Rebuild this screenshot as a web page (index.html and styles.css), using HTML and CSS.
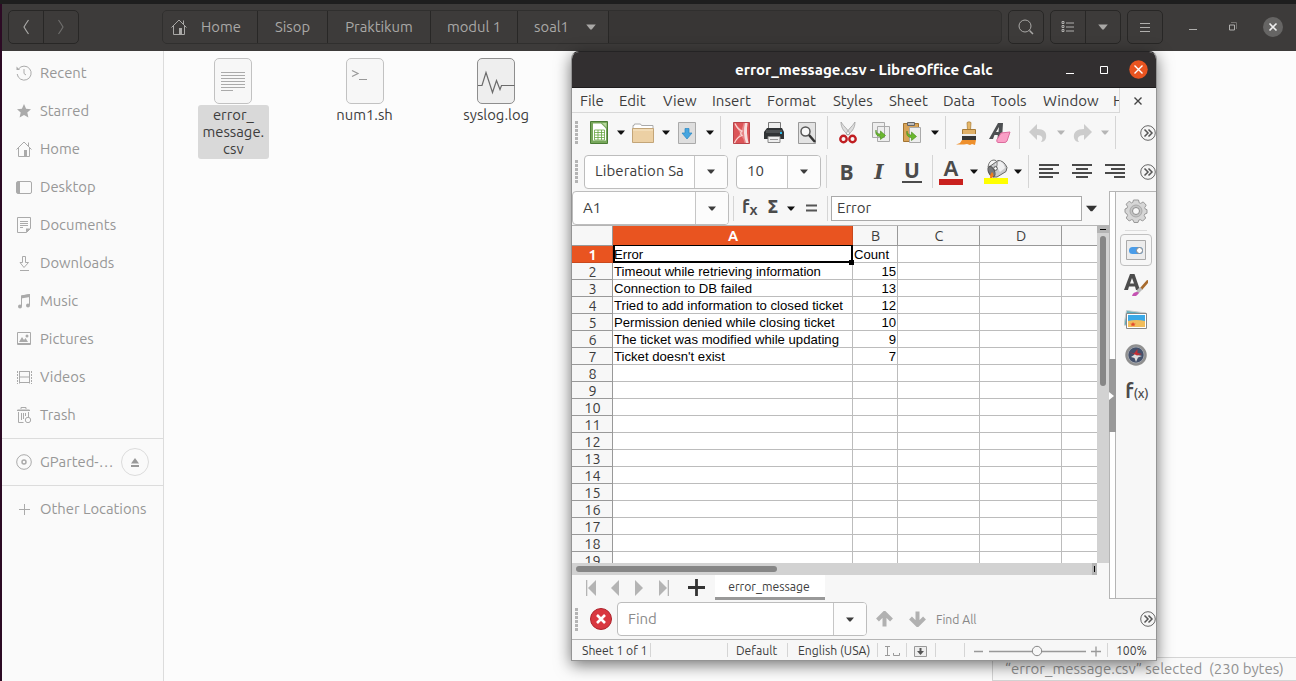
FILE: index.html
```html
<!DOCTYPE html>
<html lang="en">
<head>
<meta charset="utf-8">
<title>soal1</title>
<link rel="stylesheet" href="styles.css">
</head>
<body>
<svg class="defs" width="0" height="0">
  <symbol id="caret" viewBox="0 0 8 5"><path d="M0 .5h8L4.6 4.500H3.400z" fill="currentColor"/></symbol>
  <symbol id="house" viewBox="0 0 16 16"><path d="M.5 8.500 8 1l7.500 7.500M2.500 7v8.500h11V7M12.500 1.500v4" fill="none" stroke="currentColor"/><path d="M8 9h3v7H8z" fill="currentColor"/></symbol>
  <symbol id="more" viewBox="0 0 16 16"><circle cx="8" cy="8" r="7.300" fill="#f4f4f4" stroke="#666"/><path d="m4.500 4.500 3.500 3.500-3.500 3.500M8.500 4.500 12 8l-3.500 3.500" fill="none" stroke="#555" stroke-width="1.500"/></symbol>
</svg>
<div class="desktop">
  <header class="headerbar">
    <div class="group nav">
      <span class="btn"><svg width="8" height="16"><path d="M6.500 1Q4 4.500 2 8q2 3.500 4.500 7" fill="none" stroke="#a9a8a6" stroke-width="1.200"/></svg></span>
      <span class="btn dim"><svg width="8" height="16"><path d="M1.500 1Q4 4.500 6 8q-2 3.500-4.500 7" fill="none" stroke="#6f6e6d" stroke-width="1.200"/></svg></span>
    </div>
    <nav class="path">
      <span class="crumb home"><svg width="16" height="16"><use href="#house"/></svg><span>Home</span></span>
      <span class="crumb sisop">Sisop</span>
      <span class="crumb prak">Praktikum</span>
      <span class="crumb modul">modul 1</span>
      <span class="crumb soal">soal1<svg width="10" height="6"><use href="#caret"/></svg></span>
    </nav>
    <div class="group search"><span class="btn"><svg width="16" height="16" fill="none" stroke="#a9a8a6"><circle cx="7" cy="7" r="6"/><path d="m11.500 11.500 3.500 3.500" stroke-width="1.500"/></svg></span></div>
    <div class="group views">
      <span class="btn"><svg width="14" height="12" fill="none" stroke="#b0afad"><path d="M5 2h8M5 6h8M5 10h8M1 .5h2v2H1zM1 4.500h2v2H1zM1 8.500h2v2H1z"/></svg></span>
      <span class="btn"><svg width="10" height="6"><use href="#caret"/></svg></span>
    </div>
    <div class="group menu"><span class="btn"><svg width="12" height="11" stroke="#b0afad"><path d="M1 1.500h10M1 5.500h10M1 9.500h10"/></svg></span></div>
    <div class="winctl">
      <svg width="10" height="12"><path d="M1 8.500h8" stroke="#b0afad"/></svg>
      <svg width="10" height="10" fill="none"><path d="M3 .5h5.500V7" stroke="#73716f"/><path d="M1.500 3h5v5h-5z" stroke="#b0afad"/></svg>
      <svg width="20" height="20"><circle cx="10" cy="10" r="10" fill="#666564"/><path d="m6.500 6.500 7 7m0-7-7 7" stroke="#eee" stroke-width="1.600"/></svg>
    </div>
  </header>

  <div class="body">
    <aside class="places">
      <div class="place"><svg width="16" height="16" fill="none" stroke="currentColor"><path d="M2.500 4A7 7 0 1 1 1.200 9"/><path d="M8 4v4.500l2 1.500"/><path d="M.5 1.500V5H4z" fill="currentColor" stroke="none"/></svg>Recent</div>
      <div class="place"><svg width="16" height="16" fill="currentColor"><path d="m8 1 2.100 4.700 4.900.5-3.700 3.400 1.100 4.900L8 12l-4.400 2.500 1.100-4.900L1 6.200l4.900-.5z"/></svg>Starred</div>
      <div class="place"><svg width="16" height="16"><use href="#house"/></svg>Home</div>
      <div class="place"><svg width="16" height="16"><rect x=".5" y="2.500" width="15" height="12" rx="1.500" fill="none" stroke="currentColor"/><path d="M1 3h3v11H1z" fill="currentColor"/></svg>Desktop</div>
      <div class="place"><svg width="16" height="16"><path d="M1.500.5h13v11l-4 4h-9zM4 4.500h8M4 6.500h8M4 8.500h8M4 10.500h3" fill="none" stroke="currentColor"/><path d="M10 15.500V11.500h4.500z" fill="currentColor"/></svg>Documents</div>
      <div class="place"><svg width="16" height="16" fill="none" stroke="currentColor"><path d="M6.500 1.500h3v6h3l-4.500 5-4-5h2.500zM4 15.500h9"/></svg>Downloads</div>
      <div class="place"><svg width="16" height="16"><path d="M5.500 13V3l8-1.500v10.500" fill="none" stroke="currentColor"/><path d="M5 2.500 14 1v3L5 5.500z" fill="currentColor"/><circle cx="4" cy="13.500" r="2" fill="currentColor"/><circle cx="12" cy="12.500" r="2" fill="currentColor"/></svg>Music</div>
      <div class="place"><svg width="16" height="16"><path d="M1.500 1.500h13v12h-13z" fill="none" stroke="currentColor"/><path d="M2 12h12v2H2zM3 11l3-5 2 3 1.500-2 2.500 4z" fill="currentColor"/><circle cx="11" cy="5" r="1.500" fill="currentColor"/></svg>Pictures</div>
      <div class="place"><svg width="16" height="16" fill="none" stroke="currentColor"><path d="M3.500 2v12.500M13.500 2v12.500M3.500 2.500h10M3.500 8h10M3.500 13.500h10"/><path d="M1.500 2v13M15.500 2v13" stroke-dasharray="2 1"/></svg>Videos</div>
      <div class="place"><svg width="16" height="16" fill="none" stroke="currentColor"><path d="M5 2V.5h5V2M1 3.500h13M2.500 5v10.500h5M12.500 5v5M5.500 6v7M7.500 6v6M9.500 6v3"/><path d="M1.500 2.500h12V4h-12z" fill="currentColor" stroke="none"/><circle cx="12" cy="13" r="2.700"/></svg>Trash</div>
      <div class="rule"></div>
      <div class="place gp"><svg width="16" height="16" fill="none" stroke="currentColor"><circle cx="8" cy="8" r="7.300"/><circle cx="8" cy="8" r="2" stroke-width="1.500"/></svg><span>GParted-…</span><span class="eject"><svg width="8" height="9" fill="#999"><path d="M4 0l4 5.500H0zM0 7h8v2H0z"/></svg></span></div>
      <div class="rule"></div>
      <div class="place other"><svg width="16" height="16" stroke="currentColor"><path d="M3 8.500h11M8.500 3v11"/></svg>Other Locations</div>
    </aside>

    <main class="files">
      <div class="file">
        <svg width="38" height="46"><rect x=".5" y=".5" width="37" height="45" rx="4.500" fill="#f7f7f7" stroke="#c2c2c2"/><path d="M7 14.500h24M7 17.500h24M7 20.500h24M7 23.500h24M7 26.500h24M7 29.500h24M7 32.500h12" stroke="#aaa"/></svg>
        <span class="name sel">error_<br>message.<br>csv</span>
      </div>
      <div class="file">
        <svg width="38" height="46"><rect x=".5" y=".5" width="37" height="45" rx="4.500" fill="#f7f7f7" stroke="#c2c2c2"/><path d="m6 12.500 6 3-6 3M13 21.500h8" fill="none" stroke="#999" stroke-width="1.200"/></svg>
        <span class="name">num1.sh</span>
      </div>
      <div class="file">
        <svg width="38" height="46"><rect x=".5" y=".5" width="37" height="45" rx="4.500" fill="#eee" stroke="#8e8e8e"/><path d="M1 27.500h4l4-13 6.500 20 4-12 3.500 9 1.500-4h13" fill="none" stroke="#6b6b6b" stroke-width="1.200"/></svg>
        <span class="name">syslog.log</span>
      </div>
    </main>
  </div>
  <div class="selection">“error_message.csv” selected&nbsp; (230 bytes)</div>

  <section class="calc">
    <div class="title">
      <span class="caption">error_message.csv - LibreOffice Calc</span>
      <svg width="10" height="10"><path d="M1 8.500h8" stroke="#fff"/></svg>
      <svg width="10" height="10"><path d="M1.500 1.500h7v7h-7z" fill="none" stroke="#fff"/></svg>
      <svg width="19" height="19"><circle cx="9.500" cy="9.500" r="9.200" fill="#e95420"/><path d="m5.500 5.500 8 8m0-8-8 8" stroke="#fff" stroke-width="1.400"/></svg>
    </div>
    <div class="menubar">
      <div class="menus"><span>File</span><span>Edit</span><span>View</span><span>Insert</span><span>Format</span><span>Styles</span><span>Sheet</span><span>Data</span><span>Tools</span><span>Window</span><span>H</span></div>
      <svg class="docclose" width="10" height="10"><path d="m1.500 1.500 7 7m0-7-7 7" stroke="#444" stroke-width="1.400"/></svg>
    </div>

    <div class="bar standard">
      <i class="grip"></i>
      <svg width="18" height="23"><path d="M.5.500h17v22H.5z" fill="#77a75b" stroke="#4b7c35"/><path d="M3 2.500h8l5 5v12H3z" fill="#fff"/><path d="M12 2h4.500v4.500z" fill="#b6d89c"/><path d="M4.500 9h10v10h-10zM4.500 11.500h10M4.500 14h10M4.500 16.500h10M8 9v10M11.500 9v10" fill="none" stroke="#64a43d" stroke-width=".8"/></svg>
      <svg class="car" width="8" height="5"><use href="#caret"/></svg>
      <svg width="22" height="20"><path d="M1 6V2.500h1L2.500 1h6l1 1.500H21V6" fill="#fff" stroke="#aaa"/><path d="M.5 5.500h21v14H.5z" fill="#ecd0a4" stroke="#c3a578"/><path d="M1 7h20" stroke="#f8e8ca"/></svg>
      <svg class="car" width="8" height="5"><use href="#caret"/></svg>
      <svg width="18" height="22"><path d="M.5.500h17v21H.5z" fill="#dedede" stroke="#aaa"/><path d="M7 6.500h4V11h3l-5 6-5-6h3z" fill="#46a5df" stroke="#2687c4" stroke-width=".7"/></svg>
      <svg class="car" width="8" height="5"><use href="#caret"/></svg>
      <i class="sep"></i>
      <svg width="17" height="22"><path d="M.5.500h16v21H.5z" fill="#dc5558" stroke="#b9444a"/><path d="M1.500 1 8.500 8q1.500-4 2-7h4q-1.500 10 1 20h-4q-1-5-4-8L1.500 21 7 11.500z" fill="#e88486"/><path d="M12 1h2.500q-1.500 10 1 20h-2.500Q9.500 11 12 1z" fill="#f8e0e0"/><path d="M2 1.500q2.500 6 7 7.500-2.500 2 0 4.500Q4 15 1.500 21" fill="none" stroke="#f8d4d2" stroke-width="1.300"/></svg>
      <svg width="20" height="21"><path d="M4.500 7V.5h12V7" fill="#eee" stroke="#777"/><path d="M3 6h15l2 4v7H0v-7z" fill="#303335"/><path d="M2 8h16v3H2z" fill="#4e5153"/><path d="M4 14.500h12v6H4z" fill="#eee" stroke="#888"/><path d="M6 17.500h8" stroke="#999"/><path d="M16 10h2v2h-2z" fill="#2db8e8"/></svg>
      <svg width="18" height="22"><path d="M.5.500h17v21H.5z" fill="#e3e3e3" stroke="#999"/><circle cx="7.500" cy="9.500" r="4.500" fill="#f8f8f8" stroke="#555" stroke-width="1.500"/><path d="m11 13 6 7" stroke="#333" stroke-width="2.500"/></svg>
      <i class="sep"></i>
      <svg width="19" height="22"><path d="M2 0c0 7 4 10 7 13l2-1C9 7 5 5 2 0zm14 0c0 7-4 10-7 13l-2-1C9 7 13 5 16 0z" fill="#ddd" stroke="#999" stroke-width=".7"/><ellipse cx="4.500" cy="17" rx="3.200" ry="3.200" fill="none" stroke="#c01e22" stroke-width="2.400"/><ellipse cx="13.500" cy="17" rx="3.200" ry="3.200" fill="none" stroke="#c01e22" stroke-width="2.400"/></svg>
      <svg width="18" height="21"><path d="M.5.500h12v15H.5zM5.500 4.500h12v15h-12z" fill="#eee" stroke="#aaa"/><path d="M4 8c0 3 2 4 4.500 4V9l5 4.500-5 4v-3C5 14.500 3 12 4 8z" fill="#6ab82e" stroke="#448a17" stroke-width=".6"/></svg>
      <svg width="18" height="21"><path d="M.5 1.500h15v18H.5z" fill="#d9a458" stroke="#a37431"/><path d="M4.500.5h7v3h-7z" fill="#bbb" stroke="#666"/><path d="M6.500 5.500h11v15h-11z" fill="#eee" stroke="#aaa"/><path d="M4 9c0 3 2 4 4.500 4v-3l5 4.500-5 4v-3C5 15.500 3 13 4 9z" fill="#6ab82e" stroke="#448a17" stroke-width=".6"/></svg>
      <svg class="car" width="8" height="5"><use href="#caret"/></svg>
      <i class="sep"></i>
      <svg width="21" height="24"><path d="M11 1.500Q13 0 15 1.500L14.500 9h-3z" fill="#e6b768" stroke="#a77a32" stroke-width=".7"/><path d="M6.500 8.500h13v5h-13z" fill="#e1b168" stroke="#a87b37"/><path d="M6 13h14v2H6z" fill="#eee"/><path d="M6 15h14v4H6z" fill="#353535"/><path d="M6 19h14l-1 5-3-1-2 1-3-1-3 .5H0l4-1.500z" fill="#ee902d"/></svg>
      <svg width="22" height="21"><path d="M0 17 9 1h5l-1 16H8.500l.3-4H5.500L4 17zM7 10h2.500l.5-5z" fill="#4d5052"/><path d="m12 11 9-1-3 9q-.5 1.500-3 1.500H9q-2-.5-1-3z" fill="#fa9fc6" stroke="#dc6c9d"/></svg>
      <i class="sep"></i>
      <svg width="18" height="18"><path d="M8 0v5c7 0 10 3 9 9-1 3-3 4-5 4 3-4 1-7-4-7v5L0 8z" fill="#ccc"/></svg>
      <svg class="car pale" width="8" height="5"><use href="#caret"/></svg>
      <svg width="19" height="18"><path d="M11 0v5C4 5 0 8 1 14c1 3 3 4 5 4-3-4 0-7 5-7v5l8-8z" fill="#ccc"/></svg>
      <svg class="car pale" width="8" height="5"><use href="#caret"/></svg>
      <i class="sep"></i>
      <svg class="over" width="16" height="16"><use href="#more"/></svg>
    </div>

    <div class="bar format">
      <i class="grip"></i>
      <div class="combo face"><span>Liberation Sa</span><b><svg width="10" height="5"><use href="#caret"/></svg></b></div>
      <div class="combo size"><span>10</span><b><svg width="10" height="5"><use href="#caret"/></svg></b></div>
      <i class="sep"></i>
      <span class="glyph">B</span>
      <span class="glyph it">I</span>
      <span class="glyph un">U</span>
      <i class="sep"></i>
      <span class="glyph fontcolor">A</span>
      <svg class="car" width="8" height="5"><use href="#caret"/></svg>
      <svg width="24" height="26"><path d="M5 8 14 1.500q6 0 9 7l-1 4-9 5.500H9Q4 15 5 8z" fill="#c9cacc" stroke="#666"/><path d="m11 5 5-3q4 2 5 7l-5 4z" fill="#f0f0f1"/><ellipse cx="7.500" cy="12.500" rx="3" ry="5.500" transform="rotate(-25 7.500 12.500)" fill="#77787a" stroke="#555"/><path d="M4 8Q5 1 10 1t2 9" fill="none" stroke="#777"/><circle cx="11.500" cy="9.500" r="1.800" fill="#fff" stroke="#555"/><path d="M8 13q3 3 0 6H6q0-4 2-6z" fill="#f07d1c"/><path d="M0 19h24v6H0z" fill="#ff0"/></svg>
      <svg class="car" width="8" height="5"><use href="#caret"/></svg>
      <i class="sep"></i>
      <svg width="20" height="15" fill="#4a4a4a"><path d="M0 0h20v2H0zM0 4h14v2H0zM0 8h20v2H0zM0 12h14v2H0z"/></svg>
      <svg width="20" height="15" fill="#4a4a4a"><path d="M0 0h20v2H0zM4 4h12v2H4zM0 8h20v2H0zM4 12h12v2H4z"/></svg>
      <svg width="20" height="15" fill="#4a4a4a"><path d="M0 0h20v2H0zM6 4h14v2H6zM0 8h20v2H0zM9 12h11v2H9z"/></svg>
      <svg class="over" width="16" height="16"><use href="#more"/></svg>
    </div>

    <div class="work">
      <div class="left">
        <div class="formula">
          <div class="combo cellref"><span>A1</span><b><svg width="10" height="5"><use href="#caret"/></svg></b></div>
          <i class="sep"></i>
          <span class="fx">f<small>x</small></span>
          <span class="sum">Σ</span>
          <svg class="car" width="8" height="5"><use href="#caret"/></svg>
          <svg width="11" height="9"><path d="M0 1.500h11M0 6.500h11" stroke="#555" stroke-width="2.200"/></svg>
          <i class="sep"></i>
          <div class="input">Error</div>
          <svg class="drop" width="11" height="7"><use href="#caret"/></svg>
        </div>
        <div class="sheetwrap">
          <div class="sheet">
            <table>
              <colgroup><col class="c0"><col class="cA"><col class="cB"><col class="cC"><col class="cC"><col class="cE"></colgroup>
              <thead><tr><th></th><th class="on">A</th><th>B</th><th>C</th><th>D</th><th></th></tr></thead>
              <tbody>
                <tr><th class="on">1</th><td class="cur">Error</td><td>Count</td><td></td><td></td><td></td></tr>
                <tr><th>2</th><td>Timeout while retrieving information</td><td class="n">15</td><td></td><td></td><td></td></tr>
                <tr><th>3</th><td>Connection to DB failed</td><td class="n">13</td><td></td><td></td><td></td></tr>
                <tr><th>4</th><td>Tried to add information to closed ticket</td><td class="n">12</td><td></td><td></td><td></td></tr>
                <tr><th>5</th><td>Permission denied while closing ticket</td><td class="n">10</td><td></td><td></td><td></td></tr>
                <tr><th>6</th><td>The ticket was modified while updating</td><td class="n">9</td><td></td><td></td><td></td></tr>
                <tr><th>7</th><td>Ticket doesn't exist</td><td class="n">7</td><td></td><td></td><td></td></tr>
                <tr><th>8</th><td></td><td></td><td></td><td></td><td></td></tr>
                <tr><th>9</th><td></td><td></td><td></td><td></td><td></td></tr>
                <tr><th>10</th><td></td><td></td><td></td><td></td><td></td></tr>
                <tr><th>11</th><td></td><td></td><td></td><td></td><td></td></tr>
                <tr><th>12</th><td></td><td></td><td></td><td></td><td></td></tr>
                <tr><th>13</th><td></td><td></td><td></td><td></td><td></td></tr>
                <tr><th>14</th><td></td><td></td><td></td><td></td><td></td></tr>
                <tr><th>15</th><td></td><td></td><td></td><td></td><td></td></tr>
                <tr><th>16</th><td></td><td></td><td></td><td></td><td></td></tr>
                <tr><th>17</th><td></td><td></td><td></td><td></td><td></td></tr>
                <tr><th>18</th><td></td><td></td><td></td><td></td><td></td></tr>
                <tr><th>19</th><td></td><td></td><td></td><td></td><td></td></tr>
              </tbody>
            </table>
          </div>
          <div class="vscroll"><i class="split"></i><i class="thumb"></i></div>
        </div>
        <div class="hscroll"><i class="thumb"></i><i class="split"></i></div>
        <div class="tabs">
          <svg width="10" height="16" fill="#b4b4b4"><path d="M0 0h1.300v16H0zM10 0v16L2 8z"/></svg>
          <svg width="9" height="16" fill="#b4b4b4"><path d="M8 0v16L0 8z"/></svg>
          <svg width="9" height="16" fill="#b4b4b4"><path d="M0 0v16l8-8z"/></svg>
          <svg width="10" height="16" fill="#b4b4b4"><path d="M8.700 0H10v16H8.700zM0 0v16l8-8z"/></svg>
          <svg class="plus" width="17" height="17"><path d="M0 8.500h17M8.500 0v17" stroke="#333" stroke-width="2.800"/></svg>
          <span class="tab">error_message</span>
        </div>
      </div>
      <div class="divider"><i><svg width="5" height="8"><path d="M0 0v8l5-4z" fill="#fff"/></svg></i></div>
      <div class="rail">
        <svg width="24" height="24"><path d="M9.500 1h5l.7 2.800 1.500.6 2.500-1.500 3 3.200-1.500 2.500.6 1.500 1.700.6v3.500l-2.200.8-.6 1.500 1.500 2.500-3 3-2.500-1.400-1.500.6-.7 2.300h-4l-.8-2.300-1.500-.6-2.500 1.400-3-3 1.400-2.500-.6-1.500L1 13.500V10l2-.8.6-1.500-1.400-2.500 3-3 2.300 1.700 1.300-.6z" fill="#d6d6d6" stroke="#999"/><circle cx="12" cy="12" r="6" fill="#c4c4c4" stroke="#aaa"/><circle cx="12" cy="12" r="3.500" fill="#f7f7f7" stroke="#8d8d8d"/></svg>
        <span class="railrule"></span>
        <span class="active"><svg width="20" height="20"><path d="M.5.500h19v19H.5z" fill="#ececec" stroke="#aaa"/><rect x="3" y="7" width="14" height="7" rx="3.500" fill="#4a9ce8"/><circle cx="13.500" cy="10.500" r="3" fill="#fff" stroke="#888"/></svg></span>
        <svg class="styles" width="24" height="24"><path d="M0 17 6 1h4.500L16 17h-4l-1-3.500H5L4 17zM6 10.500h4L8 5z" fill="#4c4c4c"/><path d="m16 15 7-8q2 0 1 3l-6 7z" fill="#a86b2d"/><path d="m13 17 3-3 2.500 2.500L14 21l-2-1z" fill="#bbb"/><path d="M8 23q1-4 5-4t-1 4z" fill="#c552b2"/></svg>
        <svg class="gallery" width="24" height="20"><path d="M2.500.5 22 3l-2 15L0 15z" fill="#62aebb" stroke="#ccc"/><path d="M2.500 3.500h20v15h-20z" fill="#fff" stroke="#888"/><path d="M4 5h17v7H4z" fill="#3ba9e7"/><path d="M4 11q8-2 17 0v6H4z" fill="#f1bd5c"/><path d="m9 12 .8 1.500 2 .2-1.500 1 .3 1.600-1.600-.8-1.600.8.300-1.600-1.500-1 2-.2z" fill="#e4482e"/></svg>
        <svg class="compass" width="22" height="22"><circle cx="11" cy="11" r="9.500" fill="#44516b" stroke="#909090" stroke-width="2.500"/><circle cx="11" cy="11" r="8" fill="none" stroke="#ccc" stroke-width=".6"/><path d="m11 8 1.200 3L17 12l-4 1.500L11 18l-1.500-4L6 13l3-2z" fill="#ddd"/><path d="m4 8 5 1.500L12.500 5v4L17 10l-5 1.500-2-1z" fill="#c22f35"/></svg>
        <span class="fn">f<small>(x)</small></span>
      </div>
    </div>

    <div class="find">
      <i class="grip"></i>
      <svg width="22" height="22"><circle cx="11" cy="11" r="10.500" fill="#d93740" stroke="#ad242d"/><path d="m7 7 8 8m0-8-8 8" stroke="#fff" stroke-width="2.600"/></svg>
      <div class="combo findbox"><span>Find</span><b><svg width="10" height="5"><use href="#caret"/></svg></b></div>
      <svg class="up" width="17" height="16"><path d="M8.500 15.500V3M1.500 9l7-7 7 7" fill="none" stroke="#b1b1b1" stroke-width="4"/></svg>
      <svg class="down" width="17" height="16"><path d="M8.500.5V13M1.500 7l7 7 7-7" fill="none" stroke="#b1b1b1" stroke-width="4"/></svg>
      <span class="all">Find All</span>
      <svg class="over" width="16" height="16"><use href="#more"/></svg>
    </div>

    <footer class="status">
      <span class="s1">Sheet 1 of 1</span><span class="s2"></span><span class="s3">Default</span><span class="s4">English (USA)</span>
      <span class="s5"><svg width="16" height="11" fill="none" stroke="#999"><path d="M0 .5h5M0 9.500h5M2.500 1v8M8.500 7v2.500h6V7"/></svg></span>
      <span class="s5"><svg width="13" height="11"><path d="M.5.500h12v10H.5z" fill="#eee" stroke="#999"/><path d="M5.500 2h2v3H10L6.500 9 3 5h2.500z" fill="#555"/></svg></span>
      <span class="s5"></span>
      <span class="s6"><svg width="128" height="12" fill="none" stroke="#999"><path d="M0 6.500h9M15 6.500h97M117 6.500h10M122 1.500v10" stroke-width="1.300"/><circle cx="63" cy="6" r="4.700" fill="#f7f7f7" stroke="#888"/></svg></span>
      <span class="s7">100%</span>
    </footer>
  </section>
</div>
</body>
</html>
```
FILE: styles.css
```css
* { box-sizing: border-box; }
body { margin: 0; font: 14.800px/17px Ubuntu, "Noto Sans", sans-serif; color: #3d3d3d; overflow: hidden; }
svg { display: block; flex: none; }
.defs { position: absolute; }
.desktop { position: relative; width: 1296px; height: 681px; padding: 4px 0 0 2px; background: #fcfcfc; box-shadow: inset 0 4px #1e1e1e, inset 2px 0 #2c0a24; overflow: hidden; display: flex; flex-direction: column; }

/* File manager header */
.headerbar { height: 47px; flex: none; background: #3d3b3a; display: flex; align-items: center; padding: 0 0 1px 6px; color: #a9a8a6; }
.group, .path { display: flex; height: 34px; border: 1px solid #282726; border-radius: 5px; flex: none; }
.btn { flex: 1; display: flex; align-items: center; justify-content: center; }
.btn + .btn { border-left: 1px solid #282726; }
.nav { width: 71px; margin-right: 83px; }
.path { width: 840px; background: #383635; border-color: #302f2e; }
.crumb { display: flex; align-items: center; justify-content: center; padding-bottom: 2px; background: #3d3b3a; border-right: 1px solid #282726; }
.crumb svg { margin-top: 2px; }
.crumb.home { width: 95px; gap: 14px; padding-left: 8px; justify-content: flex-start; border-radius: 4px 0 0 4px; }
.sisop { width: 70px; }
.prak { width: 103px; }
.modul { width: 87px; }
.soal { width: 91px; gap: 17px; padding-left: 4px; }
.search { width: 36px; margin-left: 6px; }
.views { width: 71px; margin-left: 6px; }
.menu { width: 36px; margin-left: 6px; }
.winctl { display: flex; align-items: center; gap: 30px; margin-left: 25px; }
.winctl svg:last-child { margin-left: -5px; }

/* Sidebar and file grid */
.body { flex: 1; display: flex; }
.places { width: 162px; padding-top: 3px; background: #fafafa; border-right: 1px solid #dcdcdc; color: #979797; }
.place { height: 38px; display: flex; align-items: center; gap: 8px; padding: 0 0 2px 14px; white-space: nowrap; }
.place svg { color: #aaa; }
.place > svg, .eject { margin-top: 2px; }
.rule { height: 1px; background: #dcdcdc; margin: 4px 0; }
.eject { width: 28px; height: 28px; margin-left: -1px; border: 1px solid #dcdcdc; border-radius: 50%; display: flex; align-items: center; justify-content: center; }
.gp span:first-of-type { width: 74px; }
.files { display: flex; padding: 7px 0 0 3px; }
.file { width: 131.700px; display: flex; flex-direction: column; align-items: center; }
.name { margin-top: 1px; padding: 1px 4px 2px; text-align: center; border-radius: 3px; }
.sel { width: 71px; margin-left: 1px; background: #d9d9d9; }
.selection { position: absolute; left: 992px; right: 0; top: 657px; height: 24px; padding: 2px 0 0 12px; background: #f9f9f9; border: 1px solid #d4d4d4; border-right: 0; color: #929292; white-space: nowrap; font-size: 15px; }

/* Calc window */
.calc { position: absolute; left: 571px; top: 51px; width: 586px; height: 610px; border: 1px solid #949494; border-top-color: #242324; border-radius: 8px 8px 0 0; background: #f7f7f7; box-shadow: 0 4px 16px rgba(0,0,0,.55); display: flex; flex-direction: column; }
.title { height: 36px; flex: none; background: #322f30; border-bottom: 1px solid #1e1c1d; border-radius: 7px 7px 0 0; display: flex; align-items: center; color: #fff; font-weight: 700; }
.caption { width: 493px; padding-left: 163px; white-space: nowrap; font-size: 15.100px; }
.title svg + svg { margin-left: 24px; }
.title svg + svg + svg { margin-left: 20px; }
.menubar { height: 25px; flex: none; display: flex; align-items: center; }
.menus { width: 548px; height: 25px; border-bottom: 1px solid #d8d8d8; border-right: 1px solid #d8d8d8; overflow: hidden; padding: 4px 0 0 8px; display: grid; grid-template-columns: 39px 44px 49px 55px 66px 56px 54px 48px 52px 70px 20px; font-size: 15px; }
.docclose { margin-left: 13px; }
.bar { display: grid; align-items: center; justify-items: center; height: 39px; flex: none; }
.standard { grid-template-columns: 9px 36px 8px 36px 10px 32px 14px 7px 34px 32px 34px 7px 34px 32px 30px 16px 5px 37px 30px 9px 28px 18px 24px 21px 1px 40px; }
.format { grid-template-columns: 12px 152px 88px 5px 35px 30px 36px 5px 32px 13px 32px 12px 9px 31px 36px 30px 26px; }
.grip { width: 3px; height: 23px; background: repeating-linear-gradient(#b4b4b4 0 3px, transparent 3px 4px); }
.format .grip { justify-self: start; margin-left: 3px; }
.sep { width: 1px; height: 33px; background: #d5d5d5; }
.car { color: #111; }
.pale { color: #b5b5b5; }
.over { justify-self: end; }
.combo { display: flex; width: 144px; height: 34px; background: #fff; border: 1px solid #bdbdbd; border-radius: 4px; justify-self: start; overflow: hidden; font-size: 15px; }
.combo span { flex: 1; padding: 7px 0 0 10px; white-space: nowrap; overflow: hidden; }
.format .combo span { padding-top: 6px; }
.face span { letter-spacing: .1px; }
.combo b { width: 33px; border-left: 1px solid #c6c6c6; display: flex; align-items: center; justify-content: center; background: #fcfcfc; }
.combo.size { width: 85px; }
.glyph { font: 700 21px/24px "Open Sans", "Noto Sans", sans-serif; color: #4b4b4b; }
.it { font-family: "DejaVu Serif", serif; font-style: italic; font-size: 20px; }
.un { line-height: 19px; height: 22px; border-bottom: 2px solid #4b4b4b; width: 20px; text-align: center; }
.fontcolor { width: 24px; height: 26px; line-height: 19px; border-bottom: 6px solid #c9211e; text-align: center; font-family: "Liberation Sans", sans-serif; font-size: 22px; }

.work { display: flex; height: 408px; flex: none; }
.left { width: 537px; flex: none; }
.formula { height: 34px; display: flex; align-items: center; }
.combo.cellref { width: 157px; }
.formula .sep { margin-left: 4px; height: 25px; }
.fx, .sum { font-weight: 700; font-size: 18px; color: #4b4b4b; }
.fx { margin: -2px 0 0 8px; width: 25px; }
.fx small { font-size: 15px; position: relative; top: 2px; }
.sum { width: 20px; margin-top: -2px; font-family: "DejaVu Sans", sans-serif; font-size: 17px; }
.formula .car { margin-right: 11px; }
.formula .sep + .input { margin-left: 3px; }
.formula svg + .sep { margin-left: 10px; }
.input { width: 251px; height: 25px; border: 1px solid #aaa; background: #fff; padding: 2px 0 0 5px; font-size: 15px; }
.drop { margin-left: 4px; color: #333; }
.sheetwrap { display: flex; height: 338px; border-top: 1px solid #b5b5b5; }
.sheet { width: 525px; height: 337px; overflow: hidden; background: #fff; }
table { width: 525px; table-layout: fixed; border-collapse: separate; border-spacing: 0; }
.c0 { width: 41px; } .cA { width: 240px; } .cB { width: 45px; } .cC { width: 82px; } .cE { width: 35px; }
th { height: 17px; padding: 1px 0 0 1px; font-weight: 400; font-size: 14.500px; line-height: 15px; background: #f7f7f7; border: 0 solid #999; border-width: 0 1px 1px 0; }
thead th { height: 20px; line-height: 18px; }
th.on { background: #e95420; color: #fff; font-weight: 700; border-color: #c9491d; }
tr > :last-child { border-right: 0; }
td { height: 17px; padding: 1px 1px 0; font: 13.150px/15px "Liberation Sans", Arial, sans-serif; color: #000; border: 0 solid #bcbcbc; border-width: 0 1px 1px 0; white-space: nowrap; }
.n { text-align: right; }
td.cur { position: relative; }
.cur::before { content: ""; position: absolute; inset: -1px -1px -1px 0; border: 2px solid #000; border-top-width: 1px; }
.cur::after { content: ""; position: absolute; right: -2px; bottom: -3px; width: 5px; height: 5px; background: #000; }
.vscroll { width: 12px; background: #d2d2d2; }
.vscroll .split { display: block; height: 7px; background: linear-gradient(#000, #000) center / 6px 1px no-repeat #b4b4b4; }
.vscroll .thumb { display: block; width: 6px; height: 150px; margin: 3px auto 0; border-radius: 3px; background: #868686; }
.hscroll { width: 525px; height: 12px; background: #d2d2d2; display: flex; align-items: center; justify-content: space-between; padding-left: 4px; }
.hscroll .thumb { width: 201px; height: 6px; border-radius: 3px; background: #868686; }
.hscroll .split { width: 5px; height: 12px; background: linear-gradient(#000, #000) center / 1px 6px no-repeat #b4b4b4; }
.tabs { height: 25px; display: flex; align-items: center; padding-left: 14px; gap: 15px; }
.plus { margin-left: 4px; }
.tab { width: 110px; height: 25px; margin-left: -5px; padding: 3px 2px 0 0; text-align: center; font-size: 12.200px; background: #fff; border-bottom: 3px solid #999; }
.divider { width: 7px; height: 408px; border: 1px solid #b5b5b5; background: #fff; flex: none; }
.divider i { display: flex; align-items: center; width: 7px; height: 73px; margin: 167px 0 0 -1px; background: #999; }
.rail { width: 40px; height: 408px; border: solid #b5b5b5; border-width: 1px 0; display: flex; flex-direction: column; align-items: center; padding-top: 7px; }
.railrule { width: 22px; height: 1px; margin-top: 7px; background: #dcdcdc; flex: none; }
.active { width: 32px; height: 32px; margin-top: 3px; flex: none; border: 1px solid #c0c0c0; border-radius: 4px; display: flex; align-items: center; justify-content: center; }
.styles { margin: 7px 0 13px; }
.gallery { margin-bottom: 14px; }
.fn { margin-top: 14px; font: 700 20px/22px Ubuntu, "Noto Sans", sans-serif; color: #4b4b4b; white-space: nowrap; padding-left: 2px; }
.fn small { font-size: 13px; font-weight: 500; }

.find { height: 41px; flex: none; display: flex; align-items: center; padding-left: 3px; border-bottom: 1px solid #b5b5b5; }
.find > svg:first-of-type { margin-left: 12px; }
.combo.findbox { width: 250px; margin-left: 5px; }
.findbox span { color: #8b8b8b; }
.up { margin-left: 9px; }
.down { margin-left: 16px; }
.all { font-size: 12.200px; margin-left: 10px; color: #888; }
.find .over { margin-left: auto; }
.status { height: 20px; flex: none; display: flex; align-items: center; font-size: 12.200px; white-space: nowrap; }
.status span { height: 14px; line-height: 14px; border-right: 1px solid #d5d5d5; padding: 2px 0 0 8px; display: flex; align-items: center; flex: none; }
.status .s1 { width: 79px; padding-left: 10px; }
.s2 { width: 77px; }
.s3 { width: 60px; }
.status .s4 { width: 90px; padding-left: 10px; }
.s5 { width: 29px; }
.status .s5 { padding-left: 7px; }
.status .s6 { width: 143px; padding-left: 9px; }
.status .s7 { border: 0; }
```
